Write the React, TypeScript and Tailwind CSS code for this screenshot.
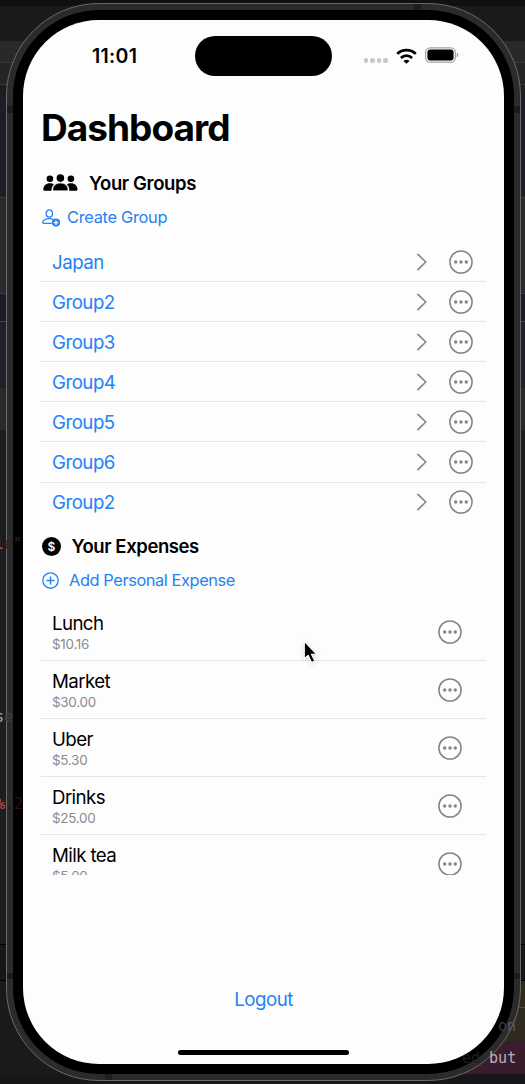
import React from "react";

const groups = ["Japan", "Group2", "Group3", "Group4", "Group5", "Group6", "Group2"];
const expenses = [
  { name: "Lunch", amount: "$10.16" },
  { name: "Market", amount: "$30.00" },
  { name: "Uber", amount: "$5.30" },
  { name: "Drinks", amount: "$25.00" },
  { name: "Milk tea", amount: "$5.00" },
];

function MoreIcon() {
  return (
    <svg width="24" height="24" viewBox="0 0 24 24" className="block shrink-0">
      <circle cx="12" cy="12" r="11.1" fill="none" stroke="#858589" strokeWidth="1.5" />
      <circle cx="6.7" cy="12" r="1.7" fill="#858589" />
      <circle cx="12" cy="12" r="1.7" fill="#858589" />
      <circle cx="17.3" cy="12" r="1.7" fill="#858589" />
    </svg>
  );
}

function ChevronIcon() {
  return (
    <svg width="10" height="18" viewBox="0 0 10 18" className="block shrink-0">
      <path d="M1 1.4 8.8 9 1 16.6" fill="none" stroke="#858589" strokeWidth="1.7" strokeLinecap="round" strokeLinejoin="round" />
    </svg>
  );
}

function PeopleIcon() {
  return (
    <svg width="35" height="18" viewBox="0 0 35 18" className="block shrink-0" fill="#000">
      <circle cx="6.9" cy="4.7" r="3.3" />
      <circle cx="27.9" cy="4.7" r="3.3" />
      <circle cx="17.4" cy="4.1" r="3.8" />
      <path d="M.3 15.6C.3 12 3 9.3 6.9 9.3c1.7 0 3 .4 4 1.1-1.700 1.500-2.400 3.500-2.400 5.500 0 .4.1.6.2.8H1.500C.7 16.700.3 16.300.3 15.600Z" />
      <path d="M34.500 15.600c0-3.600-2.700-6.300-6.600-6.300-1.700 0-3 .4-4 1.100 1.700 1.500 2.400 3.500 2.400 5.500 0 .4-.1.6-.2.8h7.200c.8 0 1.200-.4 1.200-1.100Z" />
      <path d="M9.900 15.400c0-3.500 3.200-6.300 7.500-6.300s7.500 2.800 7.500 6.300c0 .9-.5 1.300-1.500 1.300h-12c-1 0-1.500-.4-1.500-1.300Z" stroke="#fdfdfd" strokeWidth=".5" />
    </svg>
  );
}

function AddPersonIcon() {
  return (
    <svg width="19" height="18" viewBox="0 0 19 18" className="block shrink-0">
      <g fill="none" stroke="#2482f2" strokeWidth="1.3" strokeLinecap="round">
        <ellipse cx="7.300" cy="4.500" rx="3.200" ry="3.600" />
        <path d="M9.300 14.400H2.100c-.9 0-1.400-.4-1.400-1.100 0-1.900 2.900-3.700 6.600-3.700 1.300 0 2.400.2 3.300.5" />
      </g>
      <circle cx="14" cy="13.600" r="4.100" fill="#2482f2" />
      <path d="M14 11.300v4.600M11.700 13.600h4.600" stroke="#fff" strokeWidth="1.2" />
    </svg>
  );
}

function AddIcon() {
  return (
    <svg width="17" height="17" viewBox="0 0 17 17" className="block shrink-0" fill="none" stroke="#2482f2" strokeLinecap="round">
      <circle cx="8.500" cy="8.500" r="7.700" strokeWidth="1.350" />
      <path d="M8.500 5v7M5 8.500h7" strokeWidth="1.400" />
    </svg>
  );
}

function StatusBar() {
  return (
    <div className="flex h-[72px] shrink-0 items-center">
      <div className="w-[172px] pt-px pl-[69px] text-[19.500px] font-semibold tracking-[0.300px]">11:01</div>
      <div className="h-10 w-[137px] rounded-full bg-black" />
      <div className="ml-8 flex items-center">
        <div className="mt-[9px] flex gap-[2.300px]">
          {[0, 1, 2, 3].map((n) => (
            <span key={n} className="size-[4.200px] rounded-full bg-[#c5c5c6]" />
          ))}
        </div>
        <svg width="21" height="16" viewBox="0 0 21 16" className="-mt-px ml-[8px] block" fill="none" stroke="#000" strokeWidth="2.700">
          <path d="M1.200 5.900C6.400.8 14.600.8 19.800 5.900" />
          <path d="M4.900 9.900c3.200-3 8-3 11.200 0" />
          <path d="M10.500 15.800 7.500 12.900c1.700-1.600 4.300-1.600 6 0Z" fill="#000" stroke="none" />
        </svg>
        <svg width="34" height="16" viewBox="0 0 34 16" className="-mt-[2px] ml-[8.500px] block">
          <rect x=".6" y=".8" width="29.800" height="14.400" rx="4.600" fill="none" stroke="#a3a3a3" strokeWidth="1.200" />
          <rect x="2.400" y="2.600" width="26.200" height="10.800" rx="3" fill="#000" />
          <path d="M31.800 5.500c2 .8 2 4.200 0 5Z" fill="#999" />
        </svg>
      </div>
    </div>
  );
}

function Screen() {
  return (
    <div className="flex h-full flex-col overflow-hidden rounded-[76px] bg-[#fdfdfd] text-black">
      <StatusBar />
      <div className="flex flex-1 flex-col pl-[18px] pr-[18px]">
        <h1 className="mt-[11px] h-[50px] text-[37px] leading-[50px] font-bold tracking-[-0.980px]">Dashboard</h1>
        <div className="mt-[18px] flex h-[26px] items-center gap-[11px] pl-[2px]">
          <div className="-mt-[2px]"><PeopleIcon /></div>
          <h2 className="text-[18.500px] font-semibold tracking-[-0.370px]">Your Groups</h2>
        </div>
        <div className="mt-[7px] flex h-[26px] items-center gap-[6px] pl-px text-[#2482f2]">
          <div className="pt-px"><AddPersonIcon /></div>
          <span className="text-[16.400px] tracking-[-0.300px]">Create Group</span>
        </div>
        <div className="mt-[12px] h-[271.500px] overflow-hidden">
          {groups.map((group, index) => (
            <div key={index} className="flex h-[40.100px] items-center border-b border-[#e7e7e8] pr-[13px] pl-[11px]">
              <span className="flex-1 pt-[2px] text-[18.700px] tracking-[-0.500px] text-[#2482f2]">{group}</span>
              <div className="flex items-center gap-[22px]">
                <ChevronIcon />
                <MoreIcon />
              </div>
            </div>
          ))}
        </div>
        <div className="mt-[20px] flex h-[26px] items-center gap-[10.500px] pl-px">
          <div className="flex size-[19px] items-center justify-center rounded-full bg-black text-[12px] font-semibold text-white">$</div>
          <h2 className="text-[18.500px] font-semibold tracking-[-0.420px]">Your Expenses</h2>
        </div>
        <div className="mt-2 flex h-[26px] items-center gap-[10px] pl-px text-[#2482f2]">
          <AddIcon />
          <span className="text-[16.400px] tracking-[-0.420px]">Add Personal Expense</span>
        </div>
        <div className="mt-[10px] h-[271px] overflow-hidden">
          {expenses.map((expense) => (
            <div key={expense.name} className="flex h-[57.900px] items-center border-b border-[#e7e7e8] pr-[24px] pl-[11px]">
              <div className="flex-1 pt-px">
                <div className="text-[18.700px] leading-[24px] tracking-[-0.600px]">{expense.name}</div>
                <div className="-mt-px text-[13.400px] leading-[18px] tracking-[-0.250px] text-[#8b8b8f]">{expense.amount}</div>
              </div>
              <MoreIcon />
            </div>
          ))}
        </div>
        <div className="mt-[112px] text-center text-[18.700px] leading-[26px] tracking-[-0.500px] text-[#2482f2]">Logout</div>
      </div>
      <div className="mb-[9px] h-[5.500px] w-[171px] shrink-0 self-center rounded-full bg-black" />
    </div>
  );
}

function Desktop() {
  return (
    <div className="absolute inset-0 flex flex-col bg-[#191a1c]">
      <div className="h-[41px] border-t-[6px] border-[#10100f] bg-[#1a1b18]" />
      <div className="h-[22px] border-b border-[#393a3b] bg-[#282929]" />
      <div className="h-[22px] border-b border-[#393a3b] bg-[#242526]" />
      <div className="h-[112px] bg-[#1d1e24]" />
      <div className="h-[97px] border-y border-[#3a3a3b] bg-[#292a2b]" />
      <div className="h-[28px] border-b border-[#454546] bg-[#1c1d24]" />
      <div className="h-[66px] bg-[#202126]" />
      <div className="h-[42px] bg-[#29292b]" />
      <div className="h-[515px] border-b border-black bg-[#1c1d20]" />
      <div className="h-[36px] border-b border-black bg-[#151617]" />
      <div className="ml-auto h-[27px] w-[90px] border-b border-[#554d36] bg-[#302a1c]" />
      <div className="ml-auto h-[33px] w-[90px] bg-[#302b1f]" />
      <div className="ml-auto h-[33px] w-[90px] bg-[#391d2c]" />
      <div className="flex-1 bg-[#17171a]" />
    </div>
  );
}

export default function App() {
  return (
    <main className="relative h-[1084px] w-[525px] overflow-hidden bg-[#181919] font-['Inter',sans-serif]">
      <Desktop />
      <div className="relative ml-[6px] h-[1084px] w-[515px] pt-[3px] pb-[3px]">
        <div className="h-full rounded-[93px] border border-[#6a6a6a] bg-[#2b2b2b] p-[6px]">
          <div className="h-full rounded-[86px] bg-black p-[10px]">
            <Screen />
          </div>
        </div>
        <div className="absolute top-[4px] left-[408px] h-[6px] w-[7px] bg-[#1d1d1d]" />
        <div className="absolute top-[106px] left-px h-[7px] w-[6px] bg-[#1b1b1b]" />
        <div className="absolute top-[106px] right-px h-[7px] w-[6px] bg-[#1b1b1b]" />
        <div className="absolute top-[973px] left-px h-[6px] w-[6px] bg-[#1b1b1b]" />
        <div className="absolute top-[973px] right-px h-[6px] w-[6px] bg-[#1b1b1b]" />
        <div className="absolute top-[1074px] left-[99px] h-[6px] w-[7px] bg-[#1d1d1d]" />
      </div>
      <div className="absolute top-[535px] -left-[5px] font-['DejaVu_Sans_Mono',monospace] text-[15px] leading-[18px] text-[#3a2221]"><span className="text-[#c34f49]">l</span>e"</div>
      <div className="absolute top-[708px] -left-[5px] font-['DejaVu_Sans_Mono',monospace] text-[15px] leading-[18px] text-[#404040]"><span className="text-[#aaa]">s</span>e</div>
      <div className="absolute top-[795px] -left-[4px] font-['DejaVu_Sans_Mono',monospace] text-[15px] leading-[18px] text-[#2b1210]"><span className="text-[#c34f49]">%</span>.2</div>
      <div className="absolute top-[1017px] left-[498px] font-['DejaVu_Sans_Mono',monospace] text-[15px] leading-[18px] text-[#3a3a39]">o<span className="text-[#5c5a53]">n</span></div>
      <div className="absolute top-[1049px] left-[462px] font-['DejaVu_Sans_Mono',monospace] text-[15px] leading-[18px] text-[#1d1d1d]">ed <span className="text-[#b9afb5]">but</span></div>
      <svg width="19" height="26" viewBox="0 0 16 24" className="absolute top-[640px] left-[300px] drop-shadow-sm">
        <path d="M3.200 1.200V17.300l3.500-3.200 3.200 6.700 3-1.400-3.100-6.300h4.700Z" fill="#000" stroke="#fff" strokeWidth="1" strokeLinejoin="round" />
      </svg>
    </main>
  );
}
